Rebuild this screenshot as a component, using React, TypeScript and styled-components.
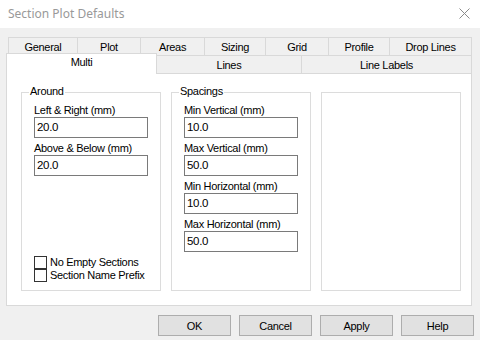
import React from "react";
import styled, { createGlobalStyle } from "styled-components";

const Global = createGlobalStyle`
  html, body { margin: 0; padding: 0; background: #f0f0f0; }
  body { font-family: "Liberation Sans", Arial, sans-serif; }
  * { box-sizing: border-box; }
`;

const Window = styled.div`
  width: 480px;
  height: 340px;
  background: #f0f0f0;
  display: flex;
  flex-direction: column;
  overflow: hidden;
  font-family: "Liberation Sans", Arial, sans-serif;
  font-size: 11px;
  letter-spacing: -0.3px;
  color: #000;
`;

const TitleBar = styled.div`
  height: 28px;
  background: #fff;
  display: flex;
  align-items: center;
  justify-content: space-between;
  padding: 0 10px 2px 8px;
`;

const Title = styled.span`
  font-family: "Noto Sans", "Segoe UI", sans-serif;
  font-size: 12px;
  letter-spacing: 0;
  color: #999;
`;

const CloseIcon = () => (
  <svg width="11" height="11" viewBox="0 0 11 11">
    <path d="M0.5 0.5 L10.5 10.5 M10.5 0.5 L0.5 10.5" stroke="#8a8a8a" strokeWidth="1" fill="none" />
  </svg>
);

const Body = styled.div`
  flex: 1;
  display: flex;
  flex-direction: column;
  padding: 9px 6px 0 6px;
`;

const TabRow = styled.div<{ $indent: number }>`
  display: flex;
  height: 18px;
  align-items: flex-start;
  padding-left: ${(p) => p.$indent}px;
`;

const Tab = styled.div<{ $w: number; $first?: boolean }>`
  width: ${(p) => p.$w}px;
  height: 18px;
  margin-left: ${(p) => (p.$first ? 0 : -1)}px;
  border: 1px solid #d9d9d9;
  border-bottom: none;
  background: #f0f0f0;
  display: flex;
  align-items: center;
  justify-content: center;
  padding-top: 1px;
  white-space: nowrap;
`;

const ActiveTab = styled.div<{ $w: number }>`
  position: relative;
  z-index: 2;
  width: ${(p) => p.$w}px;
  height: 21px;
  margin-top: -2px;
  border: 1px solid #d9d9d9;
  border-bottom: none;
  background: #fff;
  display: flex;
  justify-content: center;
  padding-top: 2px;
`;

const Panel = styled.div`
  width: 466px;
  height: 233px;
  background: #fff;
  border: 1px solid #d9d9d9;
  display: flex;
  gap: 10px;
  padding: 18px 0 0 14px;
`;

const Group = styled.div`
  position: relative;
  width: 140px;
  height: 199px;
  border: 1px solid #dcdcdc;
  display: flex;
  flex-direction: column;
  padding: 11px 0 8px 12px;
`;

const Legend = styled.span`
  position: absolute;
  top: -8px;
  left: 7px;
  padding: 0 1px;
  background: #fff;
  line-height: 13px;
`;

const Field = styled.div`
  display: flex;
  flex-direction: column;
  margin-bottom: 4px;
`;

const Label = styled.label`
  line-height: 13px;
  height: 13px;
  white-space: nowrap;
`;

const Input = styled.div`
  width: 114px;
  height: 21px;
  border: 1px solid #7a7a7a;
  background: #fff;
  padding: 2px 0 0 2px;
  font-size: 11.5px;
  line-height: 15px;
`;

const Checks = styled.div`
  margin-top: auto;
  display: flex;
  flex-direction: column;
`;

const CheckRow = styled.div`
  display: flex;
  align-items: center;
  height: 13px;
  gap: 3px;
  line-height: 13px;
`;

const Box = styled.span`
  width: 13px;
  height: 13px;
  border: 1px solid #333;
  background: #fff;
  flex: none;
`;

const ButtonBar = styled.div`
  display: flex;
  justify-content: flex-end;
  gap: 8px;
  margin-top: 9px;
`;

const Button = styled.div`
  width: 73px;
  height: 21px;
  background: #e1e1e1;
  border: 1px solid #adadad;
  display: flex;
  align-items: center;
  justify-content: center;
`;

const row1 = [
  { t: "General", w: 70 },
  { t: "Plot", w: 64 },
  { t: "Areas", w: 65 },
  { t: "Sizing", w: 62 },
  { t: "Grid", w: 64 },
  { t: "Profile", w: 62 },
  { t: "Drop Lines", w: 83 },
];

const around = [
  { l: "Left & Right (mm)", v: "20.0" },
  { l: "Above & Below (mm)", v: "20.0" },
];

const spacings = [
  { l: "Min Vertical (mm)", v: "10.0" },
  { l: "Max Vertical (mm)", v: "50.0" },
  { l: "Min Horizontal (mm)", v: "10.0" },
  { l: "Max Horizontal (mm)", v: "50.0" },
];

export default function App() {
  return (
    <>
      <Global />
      <Window>
        <TitleBar>
          <Title>Section Plot Defaults</Title>
          <CloseIcon />
        </TitleBar>
        <Body>
          <TabRow $indent={2}>
            {row1.map((t, i) => (
              <Tab key={t.t} $w={t.w} $first={i === 0}>
                {t.t}
              </Tab>
            ))}
          </TabRow>
          <TabRow $indent={0}>
            <ActiveTab $w={151}>Multi</ActiveTab>
            <Tab $w={146}>Lines</Tab>
            <Tab $w={171}>Line Labels</Tab>
          </TabRow>
          <Panel>
            <Group>
              <Legend>Around</Legend>
              {around.map((f) => (
                <Field key={f.l}>
                  <Label>{f.l}</Label>
                  <Input>{f.v}</Input>
                </Field>
              ))}
              <Checks>
                <CheckRow>
                  <Box />
                  <span>No Empty Sections</span>
                </CheckRow>
                <CheckRow>
                  <Box />
                  <span>Section Name Prefix</span>
                </CheckRow>
              </Checks>
            </Group>
            <Group>
              <Legend>Spacings</Legend>
              {spacings.map((f) => (
                <Field key={f.l}>
                  <Label>{f.l}</Label>
                  <Input>{f.v}</Input>
                </Field>
              ))}
            </Group>
            <Group />
          </Panel>
          <ButtonBar>
            <Button>OK</Button>
            <Button>Cancel</Button>
            <Button>Apply</Button>
            <Button>Help</Button>
          </ButtonBar>
        </Body>
      </Window>
    </>
  );
}
